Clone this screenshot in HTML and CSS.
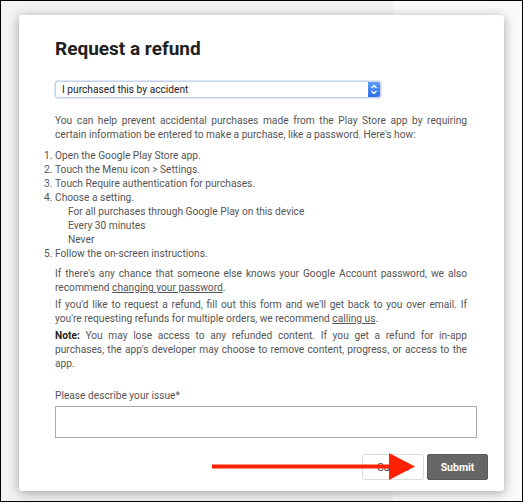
FILE: index.html
```html
<!DOCTYPE html>
<html>
<head>
<meta charset="utf-8">
<link rel="stylesheet" href="styles.css">
</head>
<body>
<div class="frame">
  <div class="card">
    <h1 class="title">Request a refund</h1>
    <div class="select">
      <span class="select-text">I purchased this by accident</span>
      <span class="stepper">
        <svg width="8" height="11" viewBox="0 0 8 11"><path d="M1.5 4 L4 1.5 L6.5 4 M1.5 7 L4 9.5 L6.5 7" fill="none" stroke="#fff" stroke-width="1.3"/></svg>
      </span>
    </div>
    <p class="para first">You can help prevent accidental purchases made from the Play Store app by requiring certain information be entered to make a purchase, like a password. Here's how:</p>
    <ol class="steps">
      <li>Open the Google Play Store app.</li>
      <li>Touch the Menu icon &gt; Settings.</li>
      <li>Touch Require authentication for purchases.</li>
      <li>Choose a setting.
        <div class="sub">For all purchases through Google Play on this device</div>
        <div class="sub">Every 30 minutes</div>
        <div class="sub">Never</div>
      </li>
      <li>Follow the on-screen instructions.</li>
    </ol>
    <p class="para">If there's any chance that someone else knows your Google Account password, we also recommend <span class="link">changing your password</span>.</p>
    <p class="para">If you'd like to request a refund, fill out this form and we'll get back to you over email. If you're requesting refunds for multiple orders, we recommend <span class="link">calling us</span>.</p>
    <p class="para"><b class="note">Note:</b> You may lose access to any refunded content. If you get a refund for in-app purchases, the app's developer may choose to remove content, progress, or access to the app.</p>
    <div class="label">Please describe your issue*</div>
    <div class="textarea"></div>
    <div class="actions">
      <div class="btn cancel">Cancel</div>
      <div class="btn submit">Submit</div>
      <svg class="arrow" width="204" height="28" viewBox="0 0 204 28"><rect x="0" y="11.5" width="180" height="4" fill="#ff2200"/><polygon points="177,0 203,13.5 177,27" fill="#ff2200"/></svg>
    </div>
  </div>
</div>
</body>
</html>
```
FILE: styles.css
```css
* { box-sizing: border-box; }
html, body { margin: 0; padding: 0; }
body { font-family: Roboto, "Liberation Sans", sans-serif; }
.frame {
  width: 523px;
  height: 502px;
  border: 1px solid #000;
  background: linear-gradient(to right, #f3f3f3 0, #f3f3f3 392px, #fafafa 392px);
  padding: 14px 0 0 18px;
}
.card {
  width: 485px;
  height: 476px;
  background: #fff;
  border-radius: 3px;
  box-shadow: 0 2px 12px rgba(0,0,0,0.35);
  padding: 22px 16px 0 36px;
  display: flex;
  flex-direction: column;
}
.card > * { flex-shrink: 0; }
.title {
  margin: 0;
  font-size: 19px;
  line-height: 24px;
  font-weight: 700;
  color: #202020;
}
.select {
  margin-top: 20px;
  width: 326px;
  height: 17px;
  border: 1px solid #c6d3ea;
  border-radius: 3px;
  box-shadow: 0 0 0 1px #dde7f8;
  display: flex;
  align-items: center;
  justify-content: space-between;
  background: #fff;
}
.select-text {
  font-size: 10.2px;
  color: #222;
  padding-left: 6px;
}
.stepper {
  width: 12px;
  height: 15px;
  background: linear-gradient(#5b9cf6, #2f6ff0);
  border-radius: 0 2px 2px 0;
  display: flex;
  align-items: center;
  justify-content: center;
}
.para {
  margin: 3px 0 0 0;
  width: 412px;
  font-size: 10.2px;
  line-height: 14px;
  color: #555;
  text-align: justify;
}
.para.first { margin-top: 16px; }
.steps {
  margin: 7px 0 3px 0;
  padding: 0;
  font-size: 10.2px;
  line-height: 14px;
  color: #555;
}
.sub { padding-left: 13px; }
.link { text-decoration: underline; }
.note { color: #222; font-weight: 700; }
.label {
  margin-top: 18px;
  font-size: 10.2px;
  line-height: 14px;
  color: #555;
}
.textarea {
  margin-top: 3px;
  width: 422px;
  height: 32px;
  border: 1px solid #aaa;
}
.actions {
  margin-top: 16px;
  display: flex;
  justify-content: flex-end;
  gap: 3px;
  position: relative;
}
.btn {
  height: 26px;
  display: flex;
  align-items: center;
  justify-content: center;
  font-size: 10.5px;
  border-radius: 2px;
}
.cancel {
  width: 62px;
  border: 1px solid #ddd;
  color: #444;
  background: #fff;
}
.submit {
  width: 61px;
  background: #666;
  color: #fff;
  font-weight: 700;
  border: 1px solid #5a5a5a;
}
.arrow {
  position: absolute;
  left: 157px;
  top: -1px;
}
```
